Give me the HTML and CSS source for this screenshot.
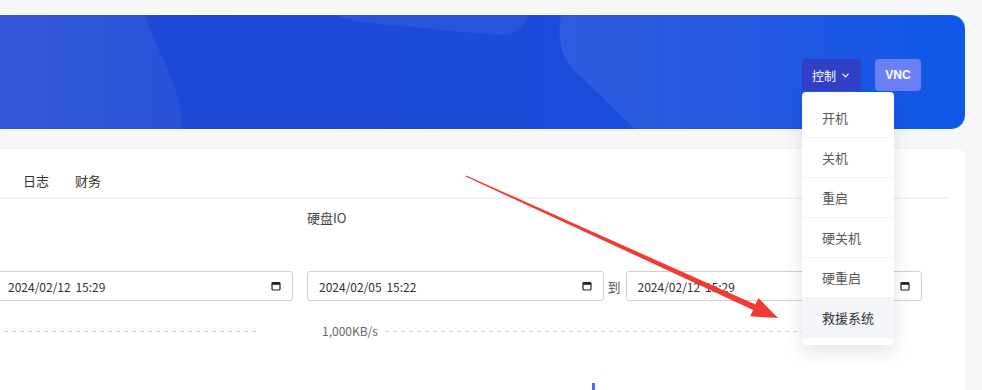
FILE: index.html
```html
<!DOCTYPE html>
<html lang="zh-CN">
<head>
<meta charset="utf-8">
<title>控制</title>
<link rel="stylesheet" href="styles.css">
</head>
<body>
<div class="page">
  <header class="banner">
    <svg class="banner-deco" viewBox="0 0 986 114" preserveAspectRatio="none" aria-hidden="true">
      <defs>
        <linearGradient id="fadeR" x1="0" y1="0" x2="1" y2="0">
          <stop offset="0" stop-color="#ffffff" stop-opacity="0.09"/>
          <stop offset="1" stop-color="#ffffff" stop-opacity="0.01"/>
        </linearGradient>
        <linearGradient id="fadeL" x1="0" y1="0" x2="1" y2="0">
          <stop offset="0" stop-color="#ffffff" stop-opacity="0.1"/>
          <stop offset="1" stop-color="#ffffff" stop-opacity="0.05"/>
        </linearGradient>
      </defs>
      <g transform="translate(21,-15)">
        <path d="M-21,15 L145,15 C160,60 182,85 182,129 L-21,129 Z" fill="url(#fadeL)"/>
        <path d="M336,15 C345,20 360,22 380,24 L495,35 C515,37 525,28 528,15 Z" fill="#ffffff" fill-opacity="0.06"/>
        <path d="M561,15 C557,40 561,55 572,68 L635,129 L965,129 L965,15 Z" fill="url(#fadeR)"/>
      </g>
    </svg>
    <div class="actions">
      <div class="dropdown">
        <button class="btn btn-ctrl">控制
          <svg class="chev" viewBox="0 0 8 5" aria-hidden="true"><path d="M1 1 L4 4 L7 1" fill="none" stroke="#fff" stroke-width="1.4" stroke-linecap="round" stroke-linejoin="round"/></svg>
        </button>
        <ul class="menu">
          <li>开机</li>
          <li>关机</li>
          <li>重启</li>
          <li>硬关机</li>
          <li>硬重启</li>
          <li class="active">救援系统</li>
        </ul>
      </div>
      <button class="btn btn-vnc">VNC</button>
    </div>
  </header>

  <section class="card">
    <nav class="tabs">
      <span class="tab">日志</span>
      <span class="tab">财务</span>
    </nav>
    <div class="cols">
      <div class="col col-left">
        <div class="col-title"></div>
        <div class="range">
          <div class="date-input"><span>2024/02/12 15:29</span>
            <svg class="cal" viewBox="0 0 10 10" aria-hidden="true"><rect x="1" y="1.5" width="8" height="7.5" rx="1" fill="none" stroke="#222" stroke-width="1.2"/><rect x="1" y="1.5" width="8" height="2.3" fill="#222"/></svg>
          </div>
        </div>
        <div class="chart chart-left">
          <span class="gridline"></span>
        </div>
      </div>
      <div class="col col-right">
        <div class="col-title">硬盘IO</div>
        <div class="range">
          <div class="date-input"><span>2024/02/05 15:22</span>
            <svg class="cal" viewBox="0 0 10 10" aria-hidden="true"><rect x="1" y="1.5" width="8" height="7.5" rx="1" fill="none" stroke="#222" stroke-width="1.2"/><rect x="1" y="1.5" width="8" height="2.3" fill="#222"/></svg>
          </div>
          <span class="to">到</span>
          <div class="date-input"><span>2024/02/12 15:29</span>
            <svg class="cal" viewBox="0 0 10 10" aria-hidden="true"><rect x="1" y="1.5" width="8" height="7.5" rx="1" fill="none" stroke="#222" stroke-width="1.2"/><rect x="1" y="1.5" width="8" height="2.3" fill="#222"/></svg>
          </div>
        </div>
        <div class="chart">
          <span class="axis-label">1,000KB/s</span>
          <span class="gridline"></span>
          <span class="bar"></span>
        </div>
      </div>
    </div>
  </section>
</div>

<svg class="annotation" viewBox="0 0 982 390" aria-hidden="true">
  <polygon points="466.3,175.4 755.5,304.5 758.4,298.1 778,318 750.2,316.3 753.1,309.9 465.7,176.6" fill="#ef3b33"/>
</svg>
</body>
</html>
```

FILE: styles.css
```css
html, body {
  margin: 0;
  height: 390px;
  overflow: hidden;
}
body {
  background: #f6f7f9;
  font-family: "Noto Sans CJK SC", "Microsoft YaHei", sans-serif;
  color: #333;
  position: relative;
}
.page {
  width: 986px;
  margin-left: -21px;
  padding-top: 15px;
}
.banner {
  position: relative;
  height: 114px;
  border-radius: 14px;
  background: linear-gradient(to right, #2048d4 0%, #1c4bda 55%, #1a4fdf 75%, #0c56e8 100%);
  display: flex;
  justify-content: flex-end;
  align-items: flex-start;
  padding: 44px 44px 0 0;
  box-sizing: border-box;
}
.banner-deco {
  position: absolute;
  left: 0;
  top: 0;
  width: 100%;
  height: 100%;
  border-radius: 14px;
}
.actions {
  position: relative;
  display: flex;
  gap: 14px;
  z-index: 2;
}
.dropdown {
  position: relative;
}
.btn {
  border: 0;
  height: 32px;
  padding: 0;
  font-family: "Noto Sans CJK SC", "Microsoft YaHei", sans-serif;
  font-size: 12px;
  color: #fff;
  display: flex;
  align-items: center;
  justify-content: center;
  cursor: pointer;
}
.btn-ctrl {
  width: 59px;
  background: #3140c6;
  border-radius: 3px 3px 0 0;
  gap: 6px;
  padding-right: 2px;
}
.chev {
  width: 7px;
  height: 5px;
}
.btn-vnc {
  width: 46px;
  background: #6b80f6;
  border-radius: 4px;
  font-family: "Liberation Sans", Arial, sans-serif;
  font-weight: bold;
  font-size: 12px;
}
.menu {
  position: absolute;
  top: 33px;
  left: 0;
  width: 92px;
  margin: 0;
  padding: 6px 0 7px;
  list-style: none;
  background: #fff;
  border-radius: 4px;
  box-shadow: 0 6px 18px rgba(20, 30, 60, 0.13);
}
.menu li {
  height: 40px;
  line-height: 40px;
  padding-left: 20px;
  font-size: 13px;
  color: #595959;
  border-bottom: 1px solid #f3f4f6;
  box-sizing: border-box;
  white-space: nowrap;
}
.menu li.active {
  background: #f4f5f8;
  color: #333;
}
.card {
  margin-top: 20px;
  background: #fff;
  border-radius: 8px 8px 0 0;
  padding: 0 17px;
  height: 241px;
  box-sizing: border-box;
  overflow: hidden;
  box-shadow: 0 0 10px rgba(0, 0, 0, 0.025);
}
.tabs {
  display: flex;
  gap: 26px;
  padding: 24px 0 8px 27px;
  border-bottom: 2px solid #f1f2f5;
}
.tab {
  font-size: 13px;
  line-height: 16px;
  color: #333;
}
.cols {
  display: flex;
  gap: 14px;
}
.col-left {
  width: 297px;
}
.col-right {
  width: 615px;
}
.col-title {
  margin-top: 9px;
  height: 20px;
  font-size: 13px;
  line-height: 20px;
  color: #444;
}
.range {
  margin-top: 43px;
  display: flex;
  align-items: center;
  gap: 3px;
}
.date-input {
  flex: 1;
  height: 30px;
  box-sizing: border-box;
  border: 1px solid #cfcfcf;
  border-radius: 3px;
  display: flex;
  align-items: center;
  justify-content: space-between;
  padding: 0 11px 0 11px;
  font-size: 12px;
  color: #333;
  word-spacing: 2px;
}
.cal {
  width: 10px;
  height: 10px;
}
.to {
  font-size: 13px;
  color: #555;
  width: 14px;
  padding: 0 1px;
}
.chart {
  position: relative;
  height: 89px;
  box-sizing: border-box;
  display: flex;
  align-items: flex-start;
  padding: 22px 35px 0 15px;
  gap: 7px;
}
.chart-left {
  padding-left: 0;
}
.axis-label {
  font-size: 12px;
  line-height: 16px;
  color: #666;
  white-space: nowrap;
}
.gridline {
  flex: 1;
  height: 1px;
  margin-top: 8px;
  background: repeating-linear-gradient(to right, #cfcfcf 0 4px, transparent 4px 8px);
}
.bar {
  position: absolute;
  left: 285px;
  top: 82px;
  width: 3px;
  height: 7px;
  background: #5468f0;
}
.annotation {
  position: absolute;
  left: 0;
  top: 0;
  width: 982px;
  height: 390px;
  pointer-events: none;
  z-index: 5;
}
```
